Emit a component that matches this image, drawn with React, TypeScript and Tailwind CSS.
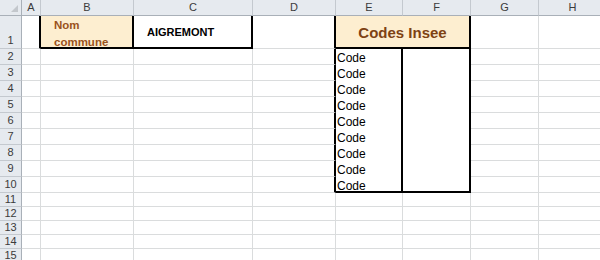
import React from "react";

const cols = ["A", "B", "C", "D", "E", "F", "G", "H"];

const hdr =
  "bg-[#e6eaef] border-r border-b border-r-[#c4c9cf] border-b-[#a9b0b8] text-[#3b3b3b] text-[11px] flex items-center justify-center";
const rowHdr =
  "bg-[#e6eaef] border-r border-b border-r-[#a9b0b8] border-b-[#c4c9cf] text-[#3b3b3b] text-[11px] flex justify-center";
const cell = "border-r border-b border-[#dadcdd]";

function RowHeader({ n, tall }: { n: number; tall?: boolean }) {
  return (
    <div className={`${rowHdr} ${tall ? "items-end pb-0" : "items-center"}`}>
      {n}
    </div>
  );
}

export default function App() {
  const midRows = [2, 3, 4, 5, 6, 7, 8, 9, 10];
  const lowRows = [11, 12, 13, 14, 15];
  return (
    <div
      className="w-[600px] h-[260px] overflow-hidden bg-white"
      style={{ fontFamily: '"Liberation Sans", Arial, sans-serif' }}
    >
      <div className="grid grid-cols-[22px_19px_93px_119px_83px_67px_68px_68px_68px] grid-rows-[16px_33px_repeat(9,16px)_repeat(5,14px)]">
        {/* header row */}
        <div className="bg-[#e6eaef] border-r border-b border-r-[#a9b0b8] border-b-[#a9b0b8] relative">
          <svg className="absolute right-[3px] bottom-[3px]" width="7" height="7" viewBox="0 0 7 7">
            <polygon points="7,0 7,7 0,7" fill="#c3c7cc" />
          </svg>
        </div>
        {cols.map((c) => (
          <div key={c} className={hdr}>
            {c}
          </div>
        ))}

        {/* row 1 */}
        <RowHeader n={1} tall />
        <div className="border-r-2 border-r-black border-b border-b-[#dadcdd]" />
        <div className="bg-[#fdeed0] border-r-2 border-b-2 border-black pl-[13px] pt-[1px] flex flex-col justify-start text-[11.5px] font-bold leading-[17px] text-[#9a521c]">
          <span>Nom</span>
          <span>commune</span>
        </div>
        <div className="border-r-2 border-b-2 border-black flex items-center pl-[13px] pt-[2px] text-[11px] font-bold text-black">
          AIGREMONT
        </div>
        <div className="border-r-2 border-r-black border-b border-b-[#dadcdd]" />
        <div className="col-span-2 bg-[#fdeed0] border-r-2 border-b-2 border-black flex items-center justify-center pt-[3px] text-[15px] font-bold text-[#7e4214]">
          Codes Insee
        </div>
        <div className={cell} />
        <div className={cell} />

        {/* rows 2-10 */}
        {midRows.map((r) => (
          <React.Fragment key={r}>
            <RowHeader n={r} />
            <div className={cell} />
            <div className={cell} />
            <div className={cell} />
            <div className="border-r-2 border-r-black border-b border-b-[#dadcdd]" />
            <div
              className={`border-r-2 border-r-black ${
                r === 10 ? "border-b-2 border-b-black" : ""
              } pl-[1px] pt-[2px] flex items-start text-[12px] leading-[15px] text-black`}
            >
              Code
            </div>
            <div
              className={`border-r-2 border-r-black ${
                r === 10 ? "border-b-2 border-b-black" : ""
              }`}
            />
            <div className={cell} />
            <div className={cell} />
          </React.Fragment>
        ))}

        {/* rows 11-15 */}
        {lowRows.map((r) => (
          <React.Fragment key={r}>
            <RowHeader n={r} />
            <div className={cell} />
            <div className={cell} />
            <div className={cell} />
            <div className={cell} />
            <div className={cell} />
            <div className={cell} />
            <div className={cell} />
            <div className={cell} />
          </React.Fragment>
        ))}
      </div>
    </div>
  );
}
